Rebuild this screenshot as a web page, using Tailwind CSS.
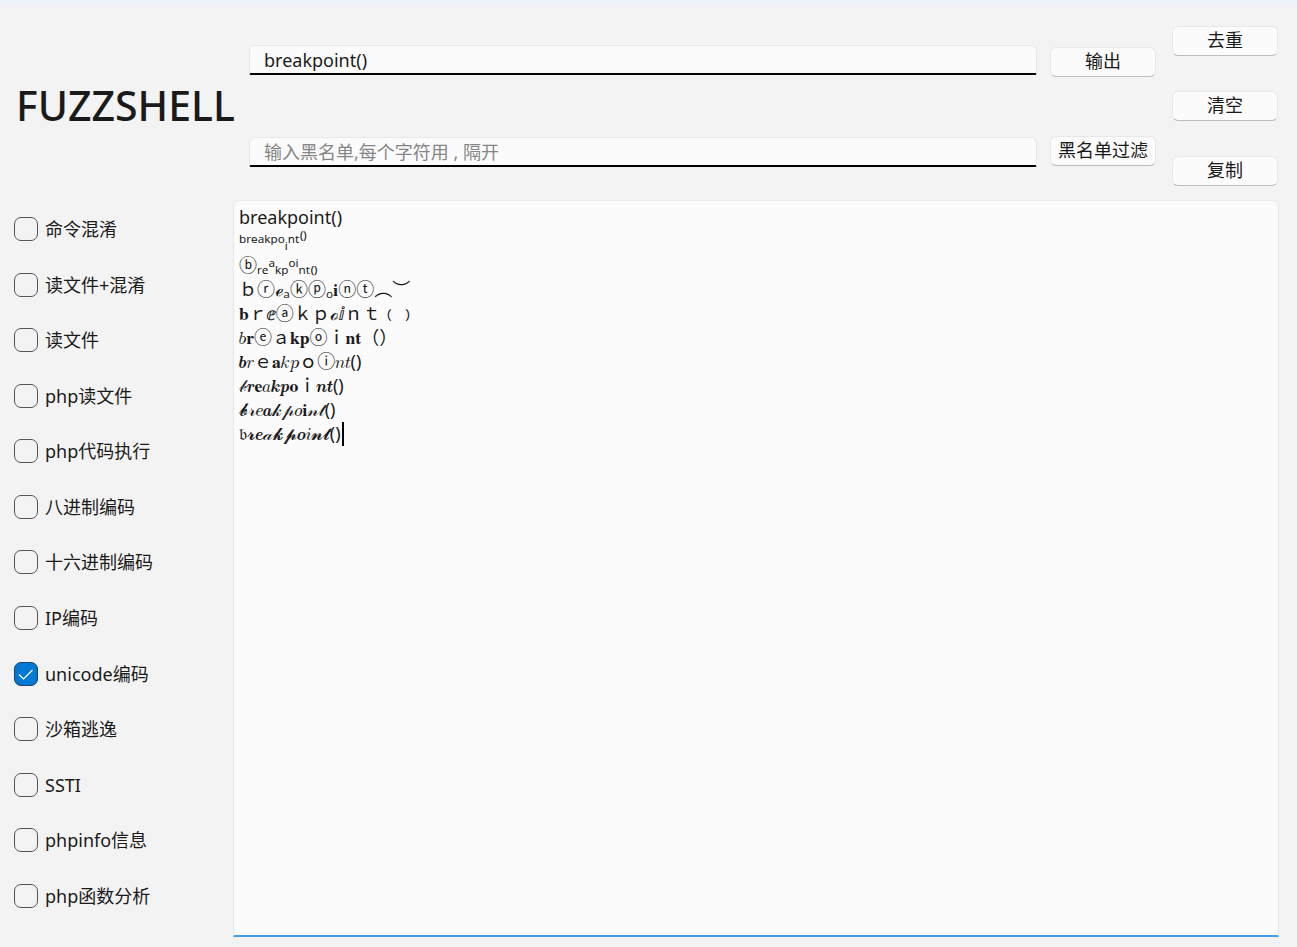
<!DOCTYPE html>
<html lang="zh-CN">
<head>
    <meta charset="UTF-8">
    <meta name="viewport" content="width=device-width, initial-scale=1.0">
    <title>FUZZSHELL</title>
    <script src="https://cdn.jsdelivr.net/npm/@tailwindcss/browser@4"></script>
</head>
<body class="min-h-screen flex flex-col bg-[#f3f3f3] border-t-5 border-[#eef3fa] text-[#1a1a1a] text-lg leading-6 font-['Noto_Sans','Noto_Sans_CJK_SC','FreeSerif',sans-serif]">
    <header class="flex h-[195px] pr-[19px]">
        <h1 class="w-[249px] shrink-0 pl-[16px] pt-[75px] text-[41px] leading-[50px] font-medium">FUZZSHELL</h1>

        <!-- payload / blacklist -->
        <div class="flex-1 flex flex-col gap-[62px] pt-10">
            <input type="text" aria-label="payload" value="breakpoint()" class="w-full h-[30px] px-[14px] pt-px rounded-t-md rounded-b-xs bg-[#fbfbfb] border border-[#e8e8e8] border-b-2 border-b-black outline-none">
            <input type="text" aria-label="黑名单" placeholder="输入黑名单,每个字符用 , 隔开" class="w-full h-[30px] px-[14px] pt-px rounded-t-md rounded-b-xs bg-[#fbfbfb] border border-[#e8e8e8] border-b-2 border-b-black placeholder:text-[#868686] outline-none">
        </div>
        <div class="w-[106px] ml-[13px] flex flex-col gap-[59px] pt-[42px]">
            <button type="button" class="h-[30px] pb-[2px] rounded-md bg-[#fbfbfb] border border-[#e8e8e8] border-b-[#bebebe]">输出</button>
            <button type="button" class="h-[30px] pb-[2px] rounded-md bg-[#fbfbfb] border border-[#e8e8e8] border-b-[#bebebe]">黑名单过滤</button>
        </div>
        <div class="w-[106px] ml-4 flex flex-col gap-[35px] pt-[21px]">
            <button type="button" class="h-[30px] pb-[2px] rounded-md bg-[#fbfbfb] border border-[#e8e8e8] border-b-[#bebebe]">去重</button>
            <button type="button" class="h-[30px] pb-[2px] rounded-md bg-[#fbfbfb] border border-[#e8e8e8] border-b-[#bebebe]">清空</button>
            <button type="button" class="h-[30px] pb-[2px] rounded-md bg-[#fbfbfb] border border-[#e8e8e8] border-b-[#bebebe]">复制</button>
        </div>
    </header>

    <main class="flex-1 flex pr-[18px] pb-[10px]">
        <form class="w-[233px] shrink-0 flex flex-col justify-between pl-[14px] pt-[17px] pb-[29px]">
            <label class="flex items-center gap-[7px]"><input type="checkbox" class="appearance-none size-6 rounded-[7px] border border-[#555]">命令混淆</label>
            <label class="flex items-center gap-[7px]"><input type="checkbox" class="appearance-none size-6 rounded-[7px] border border-[#555]">读文件+混淆</label>
            <label class="flex items-center gap-[7px]"><input type="checkbox" class="appearance-none size-6 rounded-[7px] border border-[#555]">读文件</label>
            <label class="flex items-center gap-[7px]"><input type="checkbox" class="appearance-none size-6 rounded-[7px] border border-[#555]">php读文件</label>
            <label class="flex items-center gap-[7px]"><input type="checkbox" class="appearance-none size-6 rounded-[7px] border border-[#555]">php代码执行</label>
            <label class="flex items-center gap-[7px]"><input type="checkbox" class="appearance-none size-6 rounded-[7px] border border-[#555]">八进制编码</label>
            <label class="flex items-center gap-[7px]"><input type="checkbox" class="appearance-none size-6 rounded-[7px] border border-[#555]">十六进制编码</label>
            <label class="flex items-center gap-[7px]"><input type="checkbox" class="appearance-none size-6 rounded-[7px] border border-[#555]">IP编码</label>
            <label class="flex items-center gap-[7px]">
                <span class="grid size-6">
                    <input type="checkbox" checked class="peer col-start-1 row-start-1 appearance-none size-6 rounded-[7px] border border-[#555] checked:bg-[#0078d4] checked:border-[#1c4466]">
                    <svg class="hidden peer-checked:block col-start-1 row-start-1 size-6 pointer-events-none" viewBox="0 0 24 24" fill="none" stroke="white" stroke-width="1.2"><path d="M5 12.5l4.5 4.5 9-9"/></svg>
                </span>unicode编码</label>
            <label class="flex items-center gap-[7px]"><input type="checkbox" class="appearance-none size-6 rounded-[7px] border border-[#555]">沙箱逃逸</label>
            <label class="flex items-center gap-[7px]"><input type="checkbox" class="appearance-none size-6 rounded-[7px] border border-[#555]">SSTI</label>
            <label class="flex items-center gap-[7px]"><input type="checkbox" class="appearance-none size-6 rounded-[7px] border border-[#555]">phpinfo信息</label>
            <label class="flex items-center gap-[7px]"><input type="checkbox" class="appearance-none size-6 rounded-[7px] border border-[#555]">php函数分析</label>
        </form>
        <div class="relative flex-1 flex">
            <textarea aria-label="输出结果" spellcheck="false" class="flex-1 resize-none pl-[5px] pt-1 rounded-t-md bg-[#fbfbfb] border border-[#e8e8e8] border-b-2 border-b-[#429ce3] outline-none">
breakpoint()
ᵇʳᵉᵃᵏᵖᵒᵢⁿᵗ⁽⁾
ⓑᵣₑᵃₖₚᵒⁱₙₜ₍₎
ｂⓡℯₐⓚⓟₒ𝐢ⓝⓣ︵︶
𝐛ｒⅇⓐｋｐℴⅈｎｔ﹙﹚
𝑏𝐫ⓔａ𝐤𝐩ⓞｉ𝐧𝐭（）
𝒃𝑟ｅ𝐚𝑘𝑝ｏⓘ𝑛𝑡()
𝒷𝒓𝐞𝑎𝒌𝒑𝐨ｉ𝒏𝒕()
𝓫𝓇𝑒𝒂𝓀𝓅𝑜𝐢𝓃𝓉()
𝔟𝓻𝒆𝒶𝓴𝓹𝒐𝑖𝓷𝓽()</textarea>
            <!-- text cursor -->
            <span class="absolute left-[109px] top-[222px] w-[2px] h-6 bg-black"></span>
        </div>
    </main>
</body>
</html>
